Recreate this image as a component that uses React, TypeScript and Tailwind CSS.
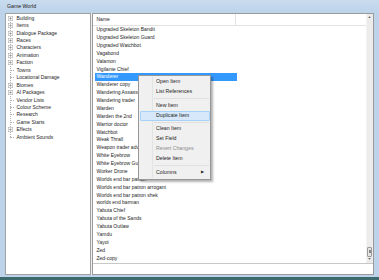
import React from 'react';

type TreeNode = { label: string; expandable: boolean };

const tree: TreeNode[] = [
  { label: 'Building', expandable: true },
  { label: 'Items', expandable: true },
  { label: 'Dialogue Package', expandable: true },
  { label: 'Races', expandable: true },
  { label: 'Characters', expandable: true },
  { label: 'Animation', expandable: true },
  { label: 'Faction', expandable: true },
  { label: 'Towns', expandable: false },
  { label: 'Locational Damage', expandable: false },
  { label: 'Biomes', expandable: true },
  { label: 'AI Packages', expandable: true },
  { label: 'Vendor Lists', expandable: false },
  { label: 'Colour Scheme', expandable: false },
  { label: 'Research', expandable: false },
  { label: 'Game Starts', expandable: false },
  { label: 'Effects', expandable: true },
  { label: 'Ambient Sounds', expandable: false },
];

const items = [
  'Upgraded Skeleton Bandit',
  'Upgraded Skeleton Guard',
  'Upgraded Watchbot',
  'Vagabond',
  'Valamon',
  'Vigilante Chief',
  'Wanderer',
  'Wanderer copy',
  'Wandering Assassin',
  'Wandering trader',
  'Warden',
  'Warden the 2nd',
  'Warrior doctor',
  'Watchbot',
  'Weak Thrall',
  'Weapon trader advanced',
  'White Eyebrow',
  'White Eyebrow Guard',
  'Worker Drone',
  'Worlds end bar patron',
  'Worlds end bar patron arrogant',
  'Worlds end bar patron shek',
  'worlds end barman',
  'Yabuta Chief',
  'Yabuta of the Sands',
  'Yabuta Outlaw',
  'Yamdu',
  'Yayoi',
  'Zed',
  'Zed-copy',
];

type MenuEntry =
  | { kind: 'item'; label: string; disabled?: boolean; active?: boolean; submenu?: boolean }
  | { kind: 'sep' };

const menu: MenuEntry[] = [
  { kind: 'item', label: 'Open Item' },
  { kind: 'item', label: 'List References' },
  { kind: 'sep' },
  { kind: 'item', label: 'New Item' },
  { kind: 'item', label: 'Duplicate Item', active: true },
  { kind: 'sep' },
  { kind: 'item', label: 'Clean Item' },
  { kind: 'item', label: 'Set Field' },
  { kind: 'item', label: 'Revert Changes', disabled: true },
  { kind: 'item', label: 'Delete Item' },
  { kind: 'sep' },
  { kind: 'item', label: 'Columns', submenu: true },
];

function Expander() {
  return (
    <svg width="5" height="5" viewBox="0 0 10 10" className="relative z-10">
      <rect x="0.5" y="0.5" width="9" height="9" fill="#fff" stroke="#a6a6a6" strokeWidth="1" />
      <path d="M2.5 5h5M5 2.5v5" stroke="#666" strokeWidth="1" />
    </svg>
  );
}

function TreePanel() {
  return (
    <div className="relative w-[86px] border border-[#a0a0a0] bg-white pt-[0.5px]">
      <div className="absolute left-[4.5px] top-[4px] h-[119px] border-l-[0.6px] border-dotted border-[#b0b0b0]" />
      {tree.map((n) => (
        <div key={n.label} className="flex h-[7.45px] items-center">
          <div className="flex w-[11px] items-center justify-start pl-[2.5px]">
            {n.expandable ? (
              <Expander />
            ) : (
              <span className="ml-[2px] w-[4px] border-t-[0.6px] border-dotted border-[#b0b0b0]" />
            )}
          </div>
          <span className="whitespace-nowrap text-[5px] leading-none text-[#1e1e1e]">{n.label}</span>
        </div>
      ))}
    </div>
  );
}

function Scrollbar() {
  return (
    <div className="flex w-[7px] flex-col items-center border-l border-[#f4f4f4] bg-[#ececec]">
      <span className="mt-[2px] text-[3.5px] leading-none text-[#555]">▲</span>
      <div className="flex-1" />
      <div className="mb-[1px] flex h-[10px] w-[5px] flex-col items-center justify-center gap-[0.6px] rounded-[1px] border-[0.6px] border-[#9a9a9a] bg-[#e4e4e4]">
        <span className="h-[0.5px] w-[2px] bg-[#888]" />
        <span className="h-[0.5px] w-[2px] bg-[#888]" />
        <span className="h-[0.5px] w-[2px] bg-[#888]" />
      </div>
      <span className="mb-[2px] text-[3.5px] leading-none text-[#555]">▼</span>
    </div>
  );
}

function ListPanel() {
  return (
    <div className="flex flex-1 flex-col border border-[#9a9a9a] bg-white">
      <div className="flex h-[250px] border-b border-[#c8c8c8]">
        <div className="flex flex-1 flex-col">
          <div className="flex h-[11.7px] border-b border-[#e2e2e2] bg-white">
            <div className="flex w-[143px] items-center border-r border-[#e2e2e2] pl-[3.5px]">
              <span className="text-[5px] leading-none text-[#1e1e1e]">Name</span>
            </div>
          </div>
          <div className="pl-[1.5px]">
            {items.map((it) =>
              it === 'Wanderer' ? (
                <div key={it} className="flex h-[7.886px] w-[142px] items-center bg-[#3399ff] pl-[2px]">
                  <span className="whitespace-nowrap text-[5px] leading-none text-white">{it}</span>
                </div>
              ) : (
                <div key={it} className="flex h-[7.886px] w-[142px] items-center pl-[2px]">
                  <span className="whitespace-nowrap text-[5px] leading-none text-[#1e1e1e]">{it}</span>
                </div>
              )
            )}
          </div>
        </div>
        <Scrollbar />
      </div>
      <div className="flex-1 bg-white" />
    </div>
  );
}

function ContextMenu() {
  return (
    <div className="absolute left-[138px] top-[75px] w-[73px] border border-[#979797] bg-[#f0f0f0] py-[1px] shadow-[2px_2px_2px_rgba(0,0,0,0.3)]">
      <div className="absolute bottom-[1px] left-[13px] top-[1px] w-[1px] border-l border-[#e2e3e3] bg-white" />
      {menu.map((m, i) =>
        m.kind === 'sep' ? (
          <div key={i} className="relative flex h-[3.5px] items-center pl-[15px] pr-[1px]">
            <div className="h-[1px] w-full border-t border-[#e0e0e0] bg-white" />
          </div>
        ) : (
          <div
            key={i}
            className={
              m.active
                ? 'relative mx-[0.5px] flex h-[10px] items-center rounded-[1px] border border-[#a8d2f5] bg-[#d6e8f9] pl-[15.5px]'
                : 'relative mx-[0.5px] flex h-[10px] items-center border border-transparent pl-[15.5px]'
            }
          >
            <span
              className={
                m.disabled
                  ? 'flex-1 whitespace-nowrap text-[5.2px] leading-none text-[#8d8d8d]'
                  : 'flex-1 whitespace-nowrap text-[5.2px] leading-none text-[#1e1e1e]'
              }
            >
              {m.label}
            </span>
            {m.submenu && <span className="mr-[5px] text-[3.5px] leading-none text-[#222]">▶</span>}
          </div>
        )
      )}
    </div>
  );
}

export default function App() {
  return (
    <div
      className="relative flex h-[280px] w-[379px] flex-col overflow-hidden bg-[#bcd3ea]"
      style={{ fontFamily: '"Liberation Sans", Arial, sans-serif' }}
    >
      <div className="flex h-[13px] items-center bg-gradient-to-b from-[#cadcee] to-[#bcd3ea] pl-[7px]">
        <span className="text-[5.2px] leading-none text-[#1a1a1a]">Game World</span>
      </div>
      <div className="flex h-[262px] pl-[4.5px] pr-[5.5px]">
        <TreePanel />
        <div className="w-[1.5px] bg-[#f0f0f0]" />
        <ListPanel />
      </div>
      <div className="h-[2px] bg-[#bcd3ea]" />
      <div className="flex-1 bg-[#3d6a6c]" />
      <ContextMenu />
    </div>
  );
}
